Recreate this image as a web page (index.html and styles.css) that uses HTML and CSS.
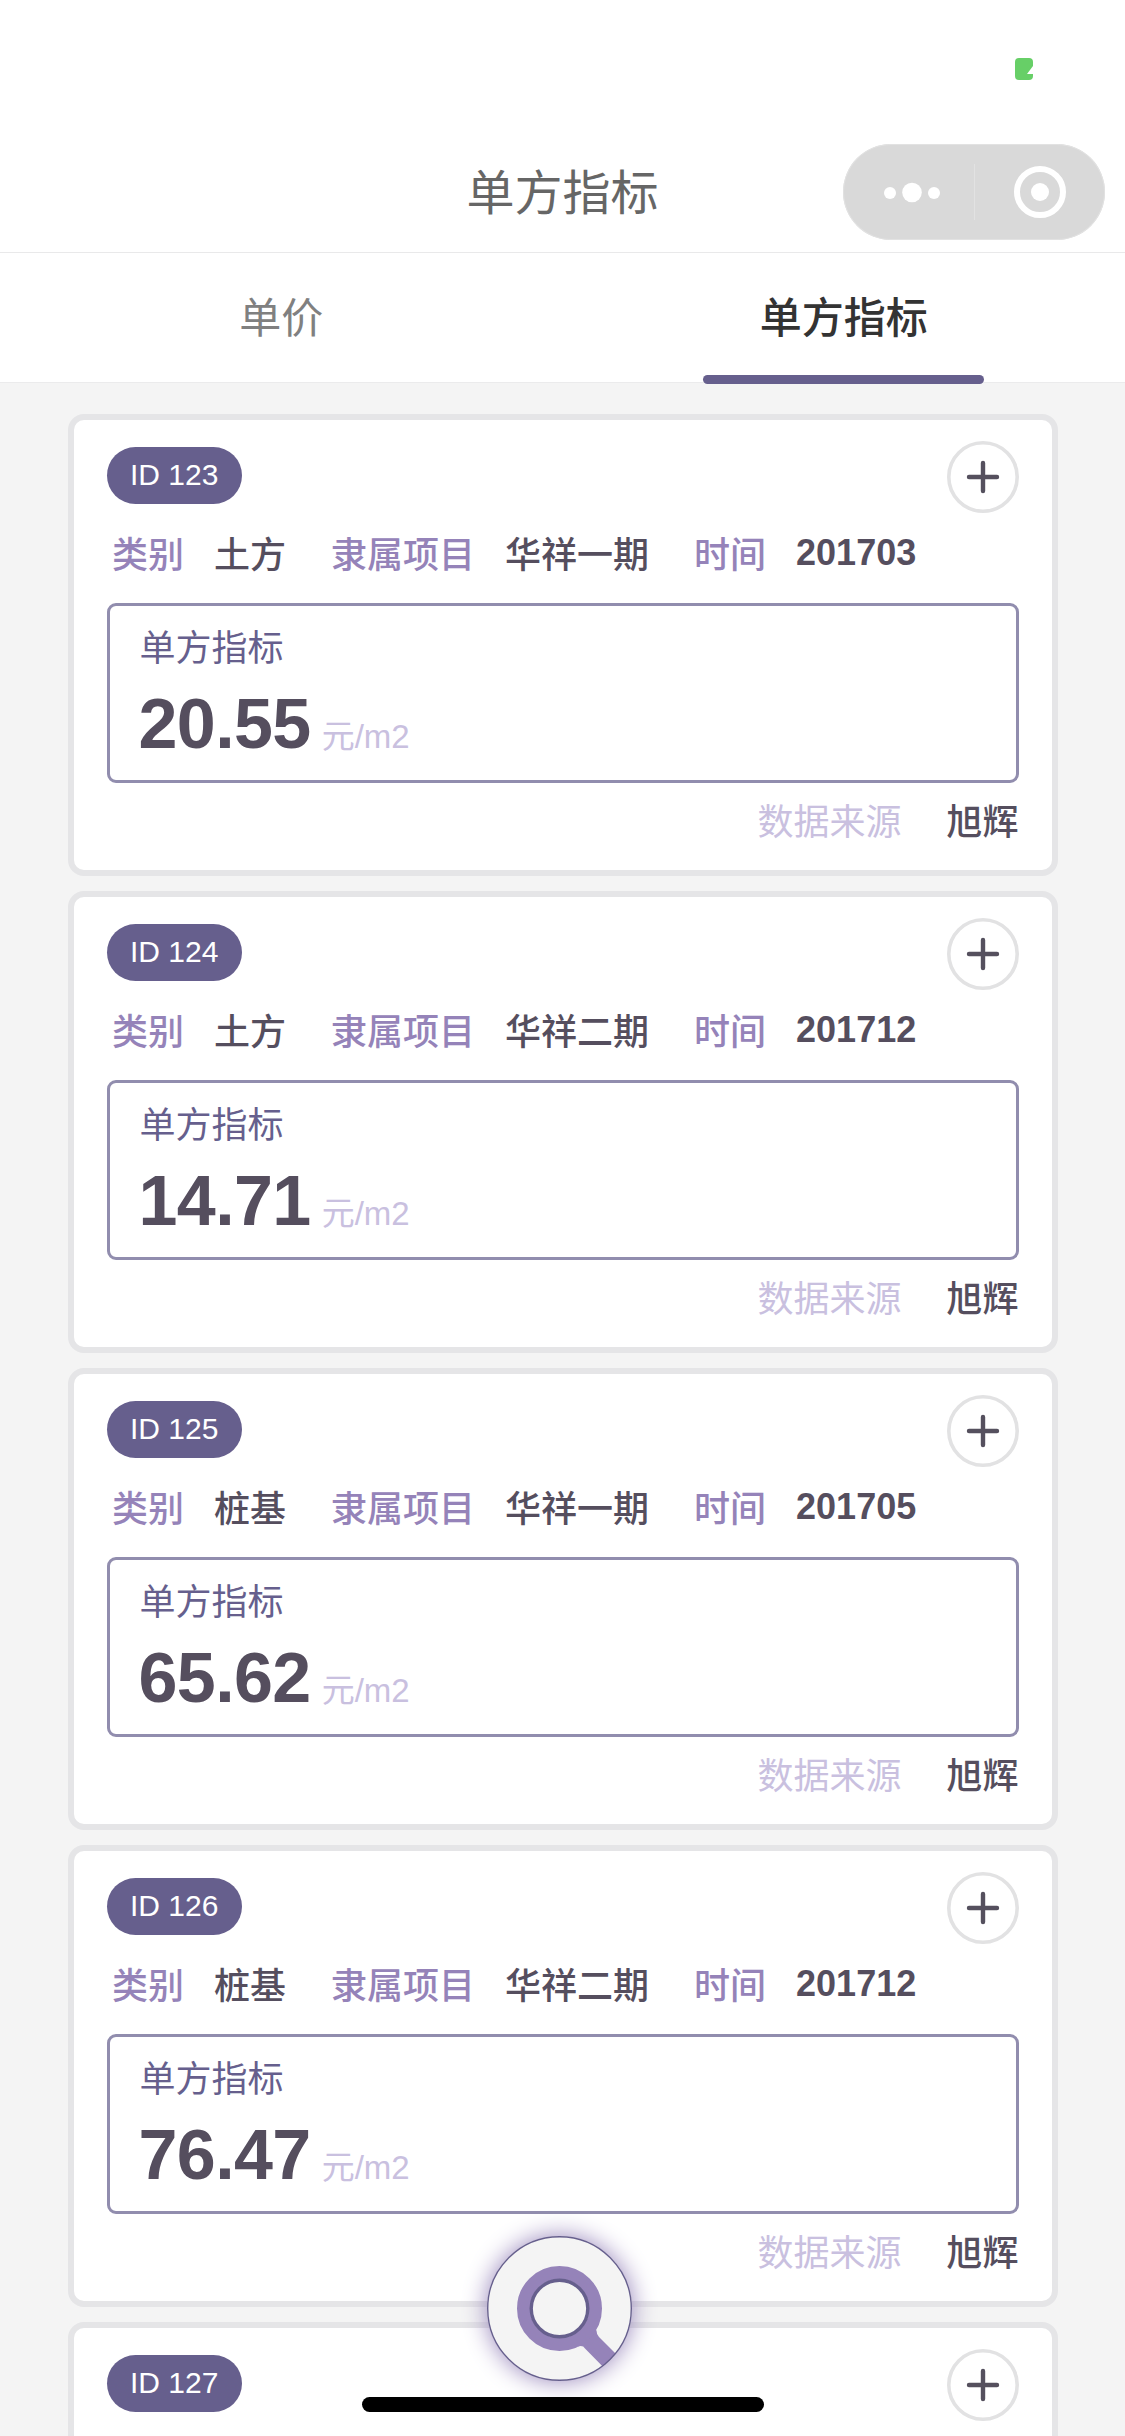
FILE: index.html
```html
<!DOCTYPE html>
<html lang="zh-CN">
<head>
<meta charset="utf-8">
<title>单方指标</title>
<link rel="stylesheet" href="styles.css">
</head>
<body>
<svg class="defs" width="0" height="0" aria-hidden="true">
  <symbol id="plus" viewBox="0 0 72 72">
    <circle cx="36" cy="36" r="34.2" fill="#fff" stroke="#e2e2e3" stroke-width="3.6"/>
    <path d="M22 36H50M36 22V50" fill="none" stroke="#55505e" stroke-width="4.4" stroke-linecap="round"/>
  </symbol>
</svg>
<div class="screen">
  <header class="navbar">
    <div class="status">
      <svg class="battery" width="18" height="22" viewBox="0 0 18 22"><path d="M4 0H14Q18 0 18 4V8L12 16H18V18Q18 22 14 22H4Q0 22 0 18V4Q0 0 4 0Z" fill="#67cf67"/></svg>
    </div>
    <div class="title-row">
      <h1 class="title">单方指标</h1>
      <div class="capsule">
        <svg width="262" height="96" viewBox="0 0 262 96">
          <g fill="#fff"><circle cx="47" cy="49" r="6"/><circle cx="69" cy="48.5" r="9.8"/><circle cx="91" cy="49" r="6"/><circle cx="197" cy="48" r="9"/></g>
          <path d="M131.5 20V76" stroke="#e2e2e2" stroke-width="1"/>
          <circle cx="197" cy="48" r="23" fill="none" stroke="#fff" stroke-width="6"/>
        </svg>
      </div>
    </div>
  </header>
  <nav class="tabs">
    <div class="tab">单价</div>
    <div class="tab active">单方指标</div>
  </nav>
  <main class="list">
    <article class="card">
      <div class="card-head"><span class="badge">ID 123</span><svg class="add"><use href="#plus"/></svg></div>
      <div class="meta"><span class="key">类别</span><span class="val">土方</span><span class="key">隶属项目</span><span class="val">华祥一期</span><span class="key">时间</span><span class="val date">201703</span></div>
      <div class="metric"><div class="metric-name">单方指标</div><div class="metric-value"><span class="num">20.55</span><span class="unit">元/m2</span></div></div>
      <div class="source"><span class="source-key">数据来源</span><span class="val">旭辉</span></div>
    </article>
    <article class="card">
      <div class="card-head"><span class="badge">ID 124</span><svg class="add"><use href="#plus"/></svg></div>
      <div class="meta"><span class="key">类别</span><span class="val">土方</span><span class="key">隶属项目</span><span class="val">华祥二期</span><span class="key">时间</span><span class="val date">201712</span></div>
      <div class="metric"><div class="metric-name">单方指标</div><div class="metric-value"><span class="num">14.71</span><span class="unit">元/m2</span></div></div>
      <div class="source"><span class="source-key">数据来源</span><span class="val">旭辉</span></div>
    </article>
    <article class="card">
      <div class="card-head"><span class="badge">ID 125</span><svg class="add"><use href="#plus"/></svg></div>
      <div class="meta"><span class="key">类别</span><span class="val">桩基</span><span class="key">隶属项目</span><span class="val">华祥一期</span><span class="key">时间</span><span class="val date">201705</span></div>
      <div class="metric"><div class="metric-name">单方指标</div><div class="metric-value"><span class="num">65.62</span><span class="unit">元/m2</span></div></div>
      <div class="source"><span class="source-key">数据来源</span><span class="val">旭辉</span></div>
    </article>
    <article class="card">
      <div class="card-head"><span class="badge">ID 126</span><svg class="add"><use href="#plus"/></svg></div>
      <div class="meta"><span class="key">类别</span><span class="val">桩基</span><span class="key">隶属项目</span><span class="val">华祥二期</span><span class="key">时间</span><span class="val date">201712</span></div>
      <div class="metric"><div class="metric-name">单方指标</div><div class="metric-value"><span class="num">76.47</span><span class="unit">元/m2</span></div></div>
      <div class="source"><span class="source-key">数据来源</span><span class="val">旭辉</span></div>
    </article>
    <article class="card">
      <div class="card-head"><span class="badge">ID 127</span><svg class="add"><use href="#plus"/></svg></div>
    </article>
  </main>
  <div class="search">
    <svg width="145" height="145" viewBox="0 0 145 145">
      <clipPath id="disc"><circle cx="72.5" cy="72.5" r="72"/></clipPath>
      <g clip-path="url(#disc)">
        <path d="M109.5 94.5Q109.5 98.5 112 101L140 129L127 142L98 112.500Q96 109 91 110.500L86 100L100 86Z" fill="#9583b9"/>
        <circle cx="72.500" cy="72.500" r="36" fill="none" stroke="#9583b9" stroke-width="13"/>
        <circle cx="72.500" cy="72.500" r="28.300" fill="#f4f4f4" stroke="#665f8d" stroke-width="3.400"/>
      </g>
      <circle cx="72.500" cy="72.500" r="71.800" fill="none" stroke="#665f8d" stroke-width="1.400"/>
    </svg>
  </div>
  <div class="home-indicator"></div>
</div>
</body>
</html>
```
FILE: styles.css
```css
* { box-sizing: border-box; }

body {
  margin: 0;
  background: #f4f4f4;
  font-family: "Liberation Sans", "Noto Sans CJK SC", sans-serif;
}

.defs { display: block; }

.screen {
  position: relative;
  width: 1125px;
  height: 2436px;
  overflow: hidden;
  background: #f4f4f4;
}

.navbar {
  height: 253px;
  background: #fff;
  border-bottom: 1px solid #e9e9ea;
}

.status {
  display: flex;
  justify-content: flex-end;
  height: 132px;
  padding: 58px 92px 0 0;
}

.title-row {
  display: grid;
  grid-template-columns: 1fr auto 1fr;
  align-items: center;
  height: 120px;
  padding: 0 20px;
}

.title {
  grid-column: 2;
  margin: 0;
  padding-top: 3px;
  font-size: 48px;
  line-height: 60px;
  font-weight: 400;
  color: #666;
}

.capsule {
  justify-self: end;
  width: 262px;
  height: 96px;
  border-radius: 48px;
  background: #d9d9d9;
  box-shadow: inset 0 0 0 1px #e2e2e2;
}

.capsule svg { display: block; }

.tabs {
  display: flex;
  height: 130px;
  background: #fff;
  border-bottom: 1px solid #ebebec;
}

.tab {
  position: relative;
  flex: 1;
  text-align: center;
  font-size: 42px;
  line-height: 132px;
  color: #808080;
}

.tab.active { color: #333; font-weight: 500; }

.tab.active::after {
  content: "";
  position: absolute;
  left: 25%;
  bottom: -2px;
  width: 50%;
  height: 9px;
  border-radius: 4.5px;
  background: #665f8d;
}

.list {
  display: flex;
  flex-direction: column;
  gap: 15px;
  padding: 31px 67.5px 0;
}

.card {
  flex: none;
  height: 462px;
  padding: 21px 33px 0;
  border: 6px solid #e5e5e7;
  border-radius: 16px;
  background: #fff;
}

.card-head {
  display: flex;
  justify-content: space-between;
  height: 72px;
}

.badge {
  height: 57px;
  margin-top: 6px;
  padding: 0 23.5px;
  border-radius: 28.5px;
  background: #665f8d;
  color: #fff;
  font-size: 30px;
  line-height: 56px;
}

.add { width: 72px; height: 72px; }

.meta {
  display: flex;
  height: 52px;
  margin-top: 16px;
  padding-left: 5.5px;
  font-size: 36px;
  line-height: 54px;
  font-weight: 500;
}

.key { margin-right: 30px; color: #9583b9; }
.val { color: #554e5e; font-weight: 500; }
.meta .val { margin-right: 45px; }
.meta .date { margin-right: 0; font-weight: 700; line-height: 47px; }

.metric {
  height: 180px;
  margin-top: 22px;
  padding: 16px 30px 0;
  border: 3px solid #918dae;
  border-radius: 9px;
}

.metric-name {
  height: 54px;
  font-size: 36px;
  line-height: 54px;
  color: #665f8d;
}

.metric-value {
  display: flex;
  align-items: baseline;
  gap: 11px;
  margin-left: -1px;
  padding-top: 9px;
  line-height: 78px;
}

.num { font-size: 70px; font-weight: 700; letter-spacing: -0.6px; color: #554e5e; }
.unit { font-size: 33px; color: #c9c0df; }

.source {
  display: flex;
  justify-content: flex-end;
  gap: 45px;
  margin-top: 13px;
  font-size: 36px;
  line-height: 54px;
}

.source-key { color: #c9c0df; }

.search {
  position: absolute;
  left: 487px;
  top: 2236px;
  width: 145px;
  height: 145px;
  border-radius: 50%;
  background: #f4f4f4;
  box-shadow: 0 0 24px #9583b9;
}

.search svg { display: block; }

.home-indicator {
  position: absolute;
  left: 362px;
  top: 2397px;
  width: 402px;
  height: 15px;
  border-radius: 7.5px;
  background: #000;
}
```
